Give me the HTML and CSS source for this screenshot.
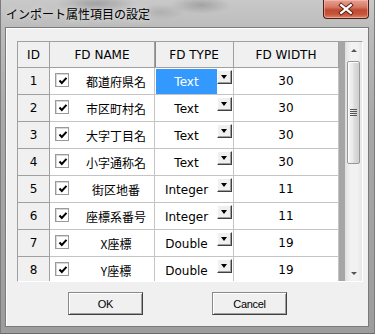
FILE: index.html
```html
<!DOCTYPE html>
<html lang="ja">
<head>
<meta charset="utf-8">
<title>インポート属性項目の設定</title>
<link rel="stylesheet" href="styles.css">
</head>
<body>
<div class="window">
  <div class="titlebar">
    <span class="title">インポート属性項目の設定</span>
    <div class="close">
      <svg width="46" height="19" viewBox="0 0 46 19">
        <path d="M18 5 L28 13 M28 5 L18 13" stroke="#5a1a10" stroke-width="4.2" stroke-linecap="square" fill="none"/>
        <path d="M18 5 L28 13 M28 5 L18 13" stroke="#ffffff" stroke-width="2.4" stroke-linecap="square" fill="none"/>
      </svg>
    </div>
  </div>
  <div class="client">
    <div class="grid">
      <div class="table">
        <div class="c hd id">ID</div>
        <div class="c hd">FD NAME</div>
        <div class="c hd hd-type">FD TYPE</div>
        <div class="c hd">FD WIDTH</div>

        <div class="c id">1</div>
        <div class="c name"><span class="chk"></span><span class="nm">都道府県名</span></div>
        <div class="c type"><span class="tt sel">Text</span><span class="dd"></span></div>
        <div class="c wd">30</div>

        <div class="c id">2</div>
        <div class="c name"><span class="chk"></span><span class="nm">市区町村名</span></div>
        <div class="c type"><span class="tt">Text</span><span class="dd"></span></div>
        <div class="c wd">30</div>

        <div class="c id">3</div>
        <div class="c name"><span class="chk"></span><span class="nm">大字丁目名</span></div>
        <div class="c type"><span class="tt">Text</span><span class="dd"></span></div>
        <div class="c wd">30</div>

        <div class="c id">4</div>
        <div class="c name"><span class="chk"></span><span class="nm">小字通称名</span></div>
        <div class="c type"><span class="tt">Text</span><span class="dd"></span></div>
        <div class="c wd">30</div>

        <div class="c id">5</div>
        <div class="c name"><span class="chk"></span><span class="nm">街区地番</span></div>
        <div class="c type"><span class="tt">Integer</span><span class="dd"></span></div>
        <div class="c wd">11</div>

        <div class="c id">6</div>
        <div class="c name"><span class="chk"></span><span class="nm">座標系番号</span></div>
        <div class="c type"><span class="tt">Integer</span><span class="dd"></span></div>
        <div class="c wd">11</div>

        <div class="c id">7</div>
        <div class="c name"><span class="chk"></span><span class="nm">X座標</span></div>
        <div class="c type"><span class="tt">Double</span><span class="dd"></span></div>
        <div class="c wd">19</div>

        <div class="c id">8</div>
        <div class="c name"><span class="chk"></span><span class="nm">Y座標</span></div>
        <div class="c type"><span class="tt">Double</span><span class="dd"></span></div>
        <div class="c wd">19</div>
      </div>
      <div class="strip"></div>
      <div class="vscroll">
        <div class="arrow up"></div>
        <div class="thumb"><span class="grip"></span></div>
        <div class="track"></div>
        <div class="arrow down"></div>
      </div>
    </div>
    <div class="buttons">
      <button class="btn">OK</button>
      <button class="btn">Cancel</button>
    </div>
  </div>
</div>
</body>
</html>
```

FILE: styles.css
```css
* { box-sizing: border-box; }
html, body { margin: 0; padding: 0; }
body {
  width: 375px;
  height: 334px;
  overflow: hidden;
  font-family: "DejaVu Sans", "Noto Sans CJK JP", sans-serif;
  font-size: 12px;
  color: #000;
}
.window {
  width: 375px;
  height: 334px;
  display: flex;
  flex-direction: column;
  padding: 0 5px 6px 4px;
  background:
    radial-gradient(ellipse 40px 10px at 95px 4px, rgba(90,90,90,0.35), rgba(90,90,90,0)),
    radial-gradient(ellipse 30px 9px at 200px 5px, rgba(80,80,80,0.3), rgba(80,80,80,0)),
    radial-gradient(ellipse 25px 8px at 160px 12px, rgba(120,120,120,0.25), rgba(120,120,120,0)),
    linear-gradient(to bottom, #c9c9c9 0, #bcbcbc 27px, #a8a8a8 120px, #9d9d9d 100%);
  border-left: 1px solid #7c7c7c;
  border-right: 1px solid #7c7c7c;
  border-bottom: 1px solid #6a6a6a;
}
.titlebar {
  height: 27px;
  display: flex;
  align-items: flex-start;
  flex: none;
}
.title {
  font-family: "Noto Sans CJK JP", sans-serif;
  font-size: 12px;
  line-height: 16px;
  padding-top: 6px;
  margin-left: 1px;
  color: #000;
  text-shadow: 0 0 6px rgba(255,255,255,0.8);
}
.close {
  margin-left: auto;
  width: 46px;
  height: 19px;
  border: 1px solid #4a2018;
  border-top: none;
  border-radius: 0 0 4px 4px;
  background: linear-gradient(to bottom, #e8a193 0, #d67764 40%, #c04a30 55%, #c7553a 80%, #d98a6c 100%);
  box-shadow: inset 0 0 0 1px rgba(255,200,190,0.5);
  display: flex;
}
.close svg { display: block; }
.client {
  flex: 1;
  background: #f0f0f0;
  border: 1px solid #7a7a7a;
  box-shadow: inset 1px 1px 0 #ffffff;
  padding: 13px 0 0 11px;
}
.grid {
  width: 346px;
  height: 241px;
  display: flex;
  overflow: hidden;
  background: #ababab;
  border-top: 1px solid #a0a0a0;
  border-left: 1px solid #a0a0a0;
  border-right: 1px solid #ffffff;
  border-bottom: 1px solid #ffffff;
}
.table {
  flex: none;
  width: 321px;
  display: grid;
  grid-template-columns: 32px 105px 79px 105px;
  grid-template-rows: 26px;
  grid-auto-rows: 27px;
  align-content: start;
  background: #fff;
}
.c {
  display: flex;
  align-items: center;
  justify-content: center;
  border-right: 1px solid #c4c4c4;
  border-bottom: 1px solid #c4c4c4;
  background: #fff;
  white-space: nowrap;
  overflow: hidden;
}
.hd {
  background: #f0f0f0;
  border-right-color: #a0a0a0;
  border-bottom-color: #a0a0a0;
}
.hd-type { box-shadow: inset 1px 0 0 #8a8a8a; }
.id {
  background: #f0f0f0;
  border-right-color: #a0a0a0;
  border-bottom-color: #a0a0a0;
}
.name {
  justify-content: flex-start;
  padding-left: 5px;
}
.chk {
  flex: none;
  width: 14px;
  height: 14px;
  margin-top: -2px;
  background:
    url("data:image/svg+xml,%3Csvg xmlns='http://www.w3.org/2000/svg' width='14' height='14'%3E%3Cpath d='M3.5 6.5 L5.8 9 L10.5 3.8' stroke='black' stroke-width='2' fill='none'/%3E%3C/svg%3E") no-repeat,
    #fff;
  border: 1px solid #9a9a9a;
  box-shadow: inset 1px 1px 0 #d8d8d8;
}
.nm {
  flex: 1;
  text-align: center;
  padding-left: 9px;
  font-family: "Noto Sans CJK JP", sans-serif;
  font-size: 12px;
}
.type {
  justify-content: flex-start;
  align-items: stretch;
}
.tt {
  flex: 1;
  display: flex;
  align-items: center;
  justify-content: center;
  margin: 1px 0 0 1px;
}
.tt.sel {
  background: #3399ff;
  color: #fff;
}
.dd {
  flex: none;
  width: 15px;
  height: 14px;
  margin: 2px 1px 0 0;
  background: #f0f0f0;
  border-style: solid;
  border-width: 1px;
  border-color: #ffffff #404040 #404040 #ffffff;
  box-shadow: inset -1px -1px 0 #a0a0a0;
  position: relative;
}
.dd::after {
  content: "";
  position: absolute;
  left: 3px;
  top: 4px;
  border-left: 3.5px solid transparent;
  border-right: 3.5px solid transparent;
  border-top: 4px solid #000;
}
.strip {
  flex: none;
  width: 6px;
  background: #a6a6a6;
}
.vscroll {
  flex: none;
  width: 17px;
  display: flex;
  flex-direction: column;
  background: linear-gradient(to right, #e4e4e4, #f2f2f2 30%, #f2f2f2 70%, #e6e6e6);
  border-left: 1px solid #e0e0e0;
}
.arrow {
  flex: none;
  height: 17px;
  position: relative;
}
.arrow::after {
  content: "";
  position: absolute;
  left: 5px;
  top: 7px;
  border-left: 3px solid transparent;
  border-right: 3px solid transparent;
}
.arrow.up::after { border-bottom: 3px solid #555; }
.arrow.down::after { border-top: 3px solid #555; top: 8px; }
.thumb {
  flex: none;
  height: 103px;
  margin: 2px 2px 0 1px;
  border: 1px solid #979797;
  border-radius: 2px;
  background: linear-gradient(to right, #f4f4f4 0, #e9e9e9 45%, #dcdcdc 55%, #cfcfcf 100%);
  box-shadow: inset 1px 1px 0 #ffffff;
  display: flex;
  align-items: center;
  justify-content: center;
}
.grip {
  width: 7px;
  height: 7px;
  background: repeating-linear-gradient(to bottom, #555 0, #555 1px, transparent 1px, transparent 2px);
}
.track { flex: 1; }
.buttons {
  display: flex;
  gap: 69px;
  margin-top: 10px;
  padding-left: 51px;
}
.btn {
  width: 75px;
  height: 23px;
  padding: 0;
  font-family: "Liberation Sans", sans-serif;
  font-size: 11px;
  letter-spacing: -0.3px;
  color: #000;
  background: #f0f0f0;
  border: 1px solid;
  border-color: #8a8a8a #404040 #404040 #8a8a8a;
  box-shadow: inset 1px 1px 0 #ffffff, inset -1px -1px 0 #a0a0a0;
}
```
